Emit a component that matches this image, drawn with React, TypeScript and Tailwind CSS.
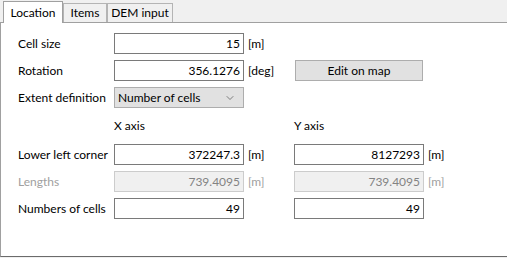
import { ChevronDown } from "lucide-react";

const font = { fontFamily: 'Lato, "Liberation Sans", sans-serif' };

function Field({ value, disabled }: { value: string; disabled?: boolean }) {
  return (
    <div
      className={`h-[21px] w-[130px] border px-[3px] flex items-center justify-end text-[12px] ${
        disabled ? "bg-[#f0f0f0] border-[#cccccc] text-[#838383]" : "bg-white border-[#7a7a7a] text-black"
      }`}
    >
      {value}
    </div>
  );
}

function Unit({ text, disabled }: { text: string; disabled?: boolean }) {
  return (
    <span className={`pl-[4px] text-[12px] ${disabled ? "text-[#a0a0a0]" : "text-black"}`}>{text}</span>
  );
}

export default function App() {
  const tabs = [
    { name: "Location", w: "w-[60px]" },
    { name: "Items", w: "w-[44px]" },
    { name: "DEM input", w: "w-[66px]" },
  ];

  return (
    <div className="w-[507px] h-[258px] bg-[#f0f0f0] flex flex-col text-[12px] text-black" style={font}>
      {/* tab strip */}
      <div className="h-[22px] flex items-end pl-[3px] shrink-0">
        {tabs.map((t, i) =>
          i === 0 ? (
            <div
              key={t.name}
              className={`${t.w} h-[22px] bg-white border border-b-0 border-[#a0a0a0] flex items-center justify-center relative z-10 -mb-px`}
            >
              {t.name}
            </div>
          ) : (
            <div
              key={t.name}
              className={`${t.w} h-[19px] bg-[#f0f0f0] border border-b-0 border-[#b4b4b4] flex items-center justify-center`}
            >
              {t.name}
            </div>
          )
        )}
      </div>

      {/* panel */}
      <div className="flex-1 bg-white border-t border-l border-b border-t-[#a0a0a0] border-l-[#a0a0a0] border-b-[#6b6b6b] mb-[1px] pl-[17px] pt-[10px]">
        <div className="grid grid-cols-[96px_130px_50px_130px_auto] gap-y-[6px] items-center">
          <span>Cell size</span>
          <Field value="15" />
          <Unit text="[m]" />
          <span />
          <span />

          <span>Rotation</span>
          <Field value="356.1276" />
          <Unit text="[deg]" />
          <button className="h-[21px] w-[128px] ml-px bg-[#e1e1e1] border border-[#adadad] text-[12px] flex items-center justify-center">
            Edit on map
          </button>
          <span />

          <span>Extent definition</span>
          <div className="h-[21px] w-[130px] bg-[#e1e1e1] border border-[#adadad] px-[3px] flex items-center justify-between">
            <span>Number of cells</span>
            <ChevronDown className="w-[12px] h-[12px] text-[#404040] mr-[4px]" strokeWidth={1.25} />
          </div>
          <span />
          <span />
          <span />

          <span className="h-[24px]" />
          <span className="h-[24px] flex items-center">X axis</span>
          <span />
          <span className="h-[24px] flex items-center">Y axis</span>
          <span />

          <span>Lower left corner</span>
          <Field value="372247.3" />
          <Unit text="[m]" />
          <Field value="8127293" />
          <Unit text="[m]" />

          <span className="text-[#a0a0a0]">Lengths</span>
          <Field value="739.4095" disabled />
          <Unit text="[m]" disabled />
          <Field value="739.4095" disabled />
          <Unit text="[m]" disabled />

          <span>Numbers of cells</span>
          <Field value="49" />
          <span />
          <Field value="49" />
          <span />
        </div>
      </div>
    </div>
  );
}
